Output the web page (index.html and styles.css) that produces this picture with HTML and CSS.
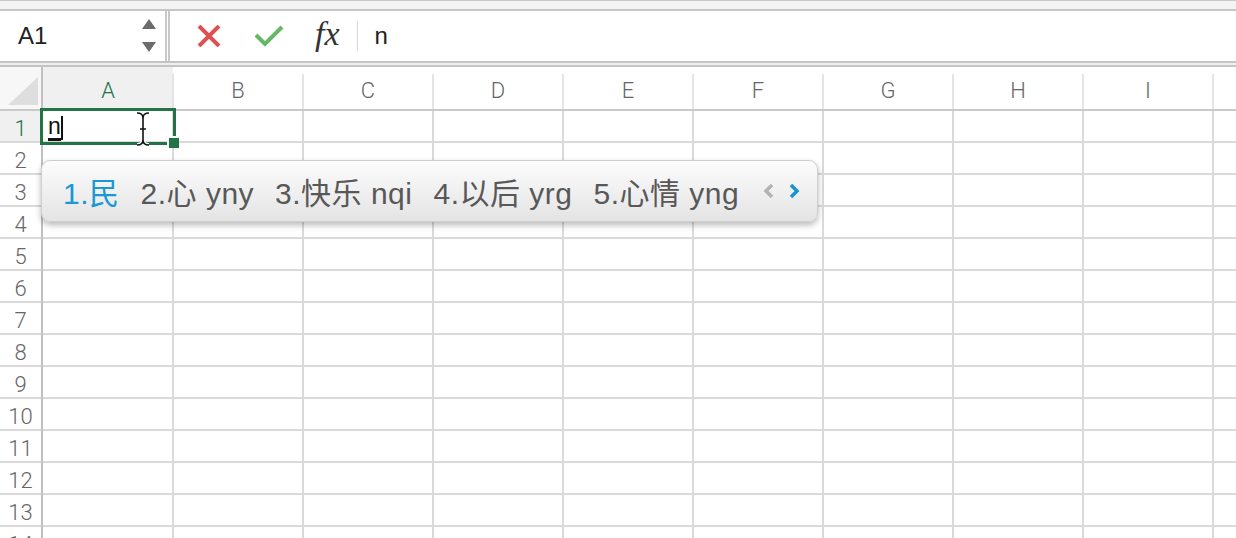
FILE: index.html
```html
<!DOCTYPE html>
<html lang="zh-CN">
<head>
    <meta charset="UTF-8">
    <title>Sheet1</title>
    <link rel="stylesheet" href="styles.css">
</head>
<body>
    <div class="topband"></div>

    <div class="formula">
        <div class="namebox">
            <span class="cellref">A1</span>
            <svg class="spinner" width="14" height="34" viewBox="0 0 14 34">
                <polygon points="7,0 14,10 0,10" fill="#6b6b6b"/>
                <polygon points="0,23 14,23 7,33" fill="#6b6b6b"/>
            </svg>
        </div>
        <div class="fbar">
            <svg class="ico-cancel" width="24" height="22" viewBox="0 0 24 22">
                <path d="M2 1 L22 21 M22 1 L2 21" stroke="#e05050" stroke-width="4" fill="none"/>
            </svg>
            <svg class="ico-enter" width="30" height="22" viewBox="0 0 30 22">
                <path d="M2 10 L11 19 L28 2" stroke="#63b963" stroke-width="4" fill="none"/>
            </svg>
            <span class="fx">fx</span>
            <span class="sep"></span>
            <span class="ftext">n</span>
        </div>
    </div>
    <div class="gap"></div>

    <div class="sheet">
        <div class="colhead">
            <div class="corner"><div class="tri"></div></div>
            <div class="col active">A</div>
            <div class="col">B</div>
            <div class="col">C</div>
            <div class="col">D</div>
            <div class="col">E</div>
            <div class="col">F</div>
            <div class="col">G</div>
            <div class="col">H</div>
            <div class="col">I</div>
            <div class="col"></div>
        </div>

        <div class="body">
            <div class="rownums">
                <div class="rn active">1</div>
                <div class="rn">2</div>
                <div class="rn">3</div>
                <div class="rn">4</div>
                <div class="rn">5</div>
                <div class="rn">6</div>
                <div class="rn">7</div>
                <div class="rn">8</div>
                <div class="rn">9</div>
                <div class="rn">10</div>
                <div class="rn">11</div>
                <div class="rn">12</div>
                <div class="rn">13</div>
                <div class="rn">14</div>
            </div>
            <div class="cells">
                <div class="selection">
                    <span class="typing">n</span><span class="caret"></span>
                    <div class="handle"></div>
                </div>
            </div>
        </div>

        <!-- IME candidate window -->
        <div class="ime">
            <span class="cand current">1.民</span>
            <span class="cand">2.心 yny</span>
            <span class="cand">3.快乐 nqi</span>
            <span class="cand">4.以后 yrg</span>
            <span class="cand">5.心情 yng</span>
            <svg class="pager" width="38" height="16" viewBox="0 0 38 16">
                <path d="M9 2 L3 8 L9 14" stroke="#b2b2b2" stroke-width="3.5" fill="none"/>
                <path d="M28 2 L34 8 L28 14" stroke="#1a93d2" stroke-width="3.5" fill="none"/>
            </svg>
        </div>

        <svg class="ibeam" width="16" height="36" viewBox="0 0 16 36">
            <path d="M2 2 Q8 2 8 7 Q8 2 14 2 M8 7 L8 29 M2 34 Q8 34 8 29 Q8 34 14 34 M5 18 L11 18"
                  stroke="#fff" stroke-width="4" fill="none"/>
            <path d="M2 2 Q8 2 8 7 Q8 2 14 2 M8 7 L8 29 M2 34 Q8 34 8 29 Q8 34 14 34 M5 18 L11 18"
                  stroke="#111" stroke-width="1.6" fill="none"/>
        </svg>
    </div>
</body>
</html>
```

FILE: styles.css
```css
*{
    box-sizing: border-box;
}
body {
    margin: 0;
    width: 1236px;
    height: 538px;
    overflow: hidden;
    background: #ffffff;
    font-family: "Liberation Sans", Arial, sans-serif;
}
.topband {
    height: 11px;
    background: #f3f3f3;
    border-top: 1px solid #cacaca;
    border-bottom: 2px solid #c6c6c6;
}
.formula {
    display: flex;
    height: 52px;
    border-bottom: 2px solid #c4c4c4;
}
.namebox {
    width: 167px;
    border-right: 2px solid #c8c8c8;
    display: flex;
    align-items: center;
    justify-content: space-between;
    padding: 0 9px 0 18px;
}
.cellref {
    font-size: 24px;
    color: #222;
}
.fbar {
    flex: 1;
    margin-left: 1px;
    border-left: 2px solid #c8c8c8;
    display: flex;
    align-items: center;
    padding-left: 27px;
}
.ico-enter {
    margin-left: 33px;
}
.fx {
    margin-left: 31px;
    font-family: "Liberation Serif", serif;
    font-style: italic;
    font-size: 34px;
    color: #333;
    margin-top: -4px;
}
.sep {
    width: 1px;
    height: 30px;
    background: #d8d8d8;
    margin-left: 17px;
}
.ftext {
    margin-left: 17px;
    font-size: 24px;
    color: #222;
}
.gap {
    height: 4px;
    background: #efefef;
    border-bottom: 2px solid #c4c4c4;
}
.sheet {
    position: relative;
}
.colhead {
    display: flex;
    height: 44px;
    border-bottom: 2px solid #c9c9c9;
}
.corner {
    width: 43px;
    flex: none;
    border-right: 2px solid #c0c0c0;
    background: #f7f7f7;
    padding: 10px 0 0 8px;
}
.tri {
    width: 30px;
    height: 28px;
    background: #dedede;
    clip-path: polygon(100% 0, 100% 100%, 0 100%);
}
.col {
    width: 130px;
    flex: none;
    position: relative;
    display: flex;
    align-items: center;
    justify-content: center;
    padding-top: 5px;
    font-family: Roboto, "Liberation Sans", sans-serif;
    font-weight: 300;
    font-size: 22px;
    color: #666;
}
.col::after {
    content: "";
    position: absolute;
    right: -1px;
    top: 7px;
    bottom: 0;
    width: 2px;
    background: #e4e4e4;
}
.col.active {
    background: #f0f0f0;
    color: #217346;
}
.body {
    display: flex;
}
.rownums {
    width: 43px;
    flex: none;
    border-right: 2px solid #c0c0c0;
}
.rn {
    height: 32px;
    border-bottom: 2px solid #dadada;
    display: flex;
    align-items: center;
    justify-content: center;
    padding-top: 4px;
    font-family: Roboto, "Liberation Sans", sans-serif;
    font-weight: 300;
    font-size: 22px;
    color: #666;
}
.rn.active {
    background: #f0f0f0;
    color: #217346;
}
.cells {
    flex: 1;
    position: relative;
    background-image:
        repeating-linear-gradient(to right, transparent 0 128px, #dadada 128px 130px),
        repeating-linear-gradient(to bottom, transparent 0 30px, #dadada 30px 32px);
    background-position: 1px 0, 0 0;
}
.selection {
    position: absolute;
    left: -3px;
    top: -3px;
    width: 136px;
    height: 37px;
    border: 3px solid #227447;
    display: flex;
    align-items: center;
    padding-left: 5px;
}
.typing {
    font-size: 23px;
    color: #111;
    line-height: 24px;
    border-bottom: 3px solid #111;
    margin-top: 2px;
}
.caret {
    width: 2px;
    height: 24px;
    background: #111;
    margin-top: 2px;
}
.handle {
    position: absolute;
    right: -6px;
    bottom: -6px;
    width: 12px;
    height: 12px;
    background: #227447;
    border: 2px solid #fff;
    border-right: none;
    border-bottom: none;
}
.ime {
    position: absolute;
    left: 41px;
    top: 93px;
    width: 777px;
    height: 62px;
    border: 1px solid #cfcfcf;
    border-radius: 9px;
    background: linear-gradient(#fcfcfc, #e4e4e4);
    box-shadow: 0 3px 6px rgba(0, 0, 0, 0.28);
    display: flex;
    align-items: center;
    padding-left: 21px;
    gap: 21px;
    font-family: "Liberation Sans", "Noto Sans CJK SC", sans-serif;
    font-size: 30px;
    letter-spacing: 0.5px;
    color: #585858;
}
.cand.current {
    color: #1a97d5;
}
.pager {
    margin-left: 3px;
}
.ibeam {
    position: absolute;
    left: 135px;
    top: 44px;
}
```
